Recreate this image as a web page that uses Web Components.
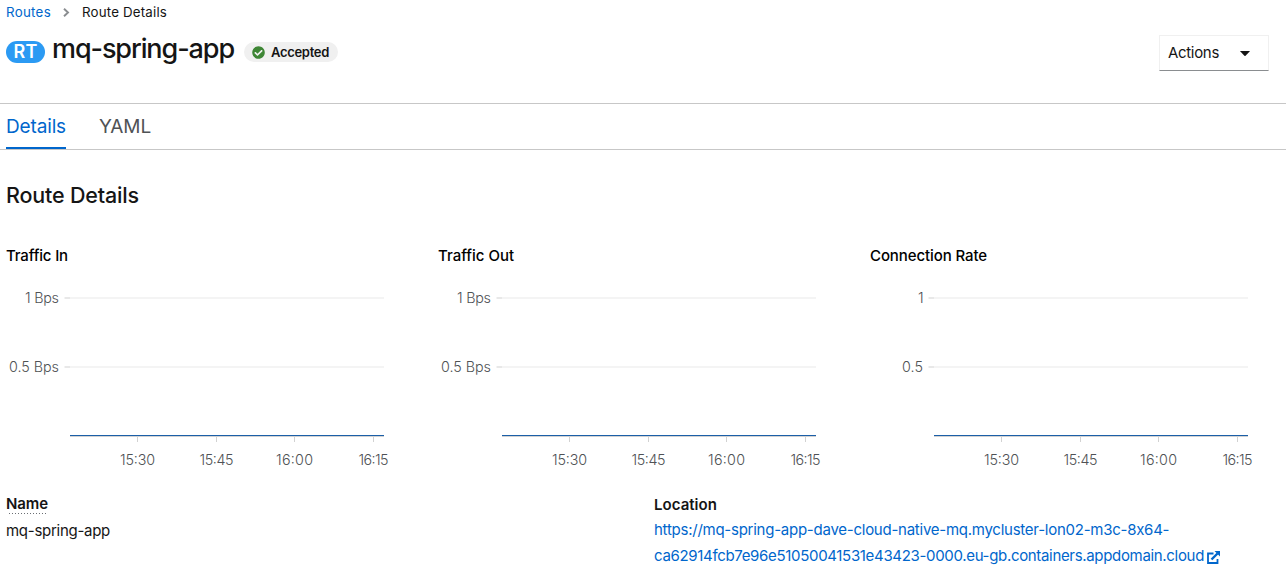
<!DOCTYPE html>
<html lang="en">
<head>
<meta charset="utf-8">
<title>mq-spring-app</title>
<style>
body { margin: 0; background: #fff; color: #151515; font-family: Inter, "Open Sans", sans-serif; font-size: 15px; }
</style>
</head>
<body>
<route-page></route-page>
<script>
const define = (name, html, init) => customElements.define(name, class extends HTMLElement {
  connectedCallback() {
    if (this.shadowRoot) return;
    this.attachShadow({ mode: 'open' }).innerHTML = html;
    if (init) init.call(this, this.shadowRoot);
  }
});

/* Single-line label tracked to a given width. */
define('fit-text', `<style>:host{display:inline-block;white-space:nowrap}span{display:inline-block}</style><span><slot></slot></span>`,
function (root) {
  const span = root.querySelector('span');
  const target = +this.getAttribute('w');
  const n = this.textContent.length;
  if (target && n > 1) {
    const gap = (target - span.getBoundingClientRect().width) / n;
    span.style.letterSpacing = gap + 'px';
  }
});

define('bread-crumb', `<style>
:host{display:flex;align-items:center;height:24px;padding-left:6px;font-size:13.3px}
.link{color:#06c}svg{margin:0 12px 0 12px}
</style><fit-text class="link" w="45">Routes</fit-text>
<svg width="7" height="9" viewBox="0 0 7 9"><path d="M1 .8 5 4.5 1 8.2" fill="none" stroke="#8a8d90" stroke-width="1.9"/></svg>
<fit-text w="85">Route Details</fit-text>`);

define('kind-badge', `<style>
:host{display:flex;align-items:center;justify-content:center;width:39px;height:22px;border-radius:11px;background:#2b9af3;color:#fff;font-size:18px;font-weight:600}
fit-text{margin-top:-1px}
</style><fit-text w="24"><slot></slot>RT</fit-text>`);

define('status-pill', `<style>
:host{display:flex;align-items:center;box-sizing:border-box;width:94px;height:20px;padding-left:8px;gap:6px;border-radius:10px;background:#f0f0f0;font-size:13px;font-weight:600}
</style><svg width="13" height="13" viewBox="0 0 512 512"><path fill="#3e8635" d="M504 256c0 136.967-111.033 248-248 248S8 392.967 8 256 119.033 8 256 8s248 111.033 248 248zM227.314 387.314l184-184c6.248-6.248 6.248-16.379 0-22.627l-22.627-22.627c-6.248-6.249-16.379-6.249-22.628 0L216 308.118l-70.059-70.059c-6.248-6.248-16.379-6.248-22.628 0l-22.627 22.627c-6.248 6.248-6.248 16.379 0 22.627l104 104c6.249 6.249 16.379 6.249 22.628.001z"/></svg>
<fit-text w="58">Accepted</fit-text>`);

define('action-menu', `<style>
:host{display:flex;align-items:center;box-sizing:border-box;width:110px;height:36px;padding:0 18px 0 8px;border:1px solid #f0f0f0;border-bottom-color:#8a8d90;justify-content:space-between;font-size:15px}
fit-text{margin-top:-2px}
</style><fit-text w="51">Actions</fit-text><svg width="10" height="5" viewBox="0 0 9 5" preserveAspectRatio="none"><path d="M.5 0h8q.6 0 .2.5L5 4.700q-.5.5-1 0L.3.5Q-.1 0 .5 0z" fill="#151515"/></svg>`);

define('page-title', `<style>
:host{display:flex;align-items:center;height:32px;margin-top:12px;padding:0 17px 0 6px}
.t{font-size:27px;font-weight:450;line-height:32px;margin:-6px 10px 0 7px}
action-menu{margin-left:auto;margin-top:2px}
</style><kind-badge></kind-badge><fit-text class="t" w="182">mq-spring-app</fit-text><status-pill></status-pill><action-menu></action-menu>`);

define('tab-bar', `<style>
:host{display:flex;gap:33px;box-sizing:border-box;height:47px;margin-top:35px;padding-left:6px;border-top:1px solid #c7c7c7;border-bottom:1px solid #c7c7c7;font-size:19px}
div{box-sizing:border-box;height:45px;line-height:46px;color:#4f5255}
.on{color:#06c;border-bottom:2px solid #06c}
</style><div class="on"><fit-text w="60">Details</fit-text></div><div><fit-text w="52">YAML</fit-text></div>`);

define('metric-chart', '', function (root) {
  const unit = this.getAttribute('unit') || '';
  const wTitle = this.getAttribute('tw');
  const rows = [['1', 18, unit ? 34 : 5], ['0.5', 87, unit ? 50 : 21]];
  const ticks = [['15:30', 137.5, 35], ['15:45', 216.5, 34], ['16:00', 294.5, 37], ['16:15', 373.5, 30]];
  root.innerHTML = `<style>
:host{display:block;width:432px}
h2{margin:0 0 0 6px;height:34px;line-height:20px;font-size:15px;font-weight:550;color:#000}
svg{display:block}text{font-size:14.3px;font-weight:300;fill:#4f5255}
</style><h2><fit-text w="${wTitle}">${this.getAttribute('heading')}</fit-text></h2>
<svg width="432" height="196" viewBox="0 0 432 196">` +
  rows.map(([t, y, w]) => `<path d="M70 ${y}H384" stroke="#f4f4f4" stroke-width="2"/><path d="M64.5 ${y}H70" stroke="#e0e0e0" stroke-width="1.5"/>
<text x="${59 - w}" y="${y + 5}" ${t === '1' && !unit ? '' : `textLength="${w}"`}>${t}${unit ? ' ' + unit : ''}</text>`).join('') +
  ticks.map(([t, x, w]) => `<path d="M${x} 157v5" stroke="#d2d2d2"/><text x="${x - w / 2}" y="185" textLength="${w}">${t}</text>`).join('') +
  `<path d="M70 156.500H384" stroke="#d2d2d2"/><path d="M70 155.500H384" stroke="#1b5fa8"/></svg>`;
});

define('detail-field', `<style>
:host{display:block}
</style><slot name="label"></slot><slot></slot>`);

define('route-page', `<style>
:host{display:block;width:1286px;height:568px;overflow:hidden}
h1{margin:31px 0 0 6px;height:28px;line-height:28px;font-size:21.500px;font-weight:450}
.charts{display:flex;margin-top:37px}
.fields{display:grid;grid-template-columns:648px 1fr;padding-left:6px;margin-top:18px}
.label{font-weight:600;line-height:20px;display:block;height:20px;width:max-content}
.help{background:repeating-linear-gradient(90deg,#6a6e73 0 1px,transparent 1px 3px) 3px 100%/38px 1px no-repeat}
.name{line-height:26px;margin-top:4px}
.loc{padding-top:1px}
.url{color:#06c;line-height:26px;margin-top:2px}
.url div{display:flex;align-items:center;gap:3px}
.url svg{margin-top:2px}
</style>
<bread-crumb></bread-crumb>
<page-title></page-title>
<tab-bar></tab-bar>
<h1><fit-text w="133">Route Details</fit-text></h1>
<div class="charts">
<metric-chart heading="Traffic In" tw="62" unit="Bps"></metric-chart>
<metric-chart heading="Traffic Out" tw="76" unit="Bps"></metric-chart>
<metric-chart heading="Connection Rate" tw="117"></metric-chart>
</div>
<div class="fields">
<detail-field><span slot="label" class="label help"><fit-text w="42">Name</fit-text></span><div class="name"><fit-text w="104">mq-spring-app</fit-text></div></detail-field>
<detail-field class="loc"><span slot="label" class="label"><fit-text w="63">Location</fit-text></span>
<div class="url"><div><fit-text w="517">https://mq-spring-app-dave-cloud-native-mq.mycluster-lon02-m3c-8x64-</fit-text></div>
<div><fit-text w="550">ca62914fcb7e96e51050041531e43423-0000.eu-gb.containers.appdomain.cloud</fit-text><svg width="13" height="13" viewBox="0 0 13 13"><path d="M6.500 2.500H1V12h9.500V8" fill="none" stroke="#06c" stroke-width="1.800"/><path d="M4.500 8.500 10.500 2.500" stroke="#06c" stroke-width="2.400"/><path d="M7.500 0H13V5.500z" fill="#06c"/></svg></div></div></detail-field>
</div>`);
</script>
</body>
</html>
